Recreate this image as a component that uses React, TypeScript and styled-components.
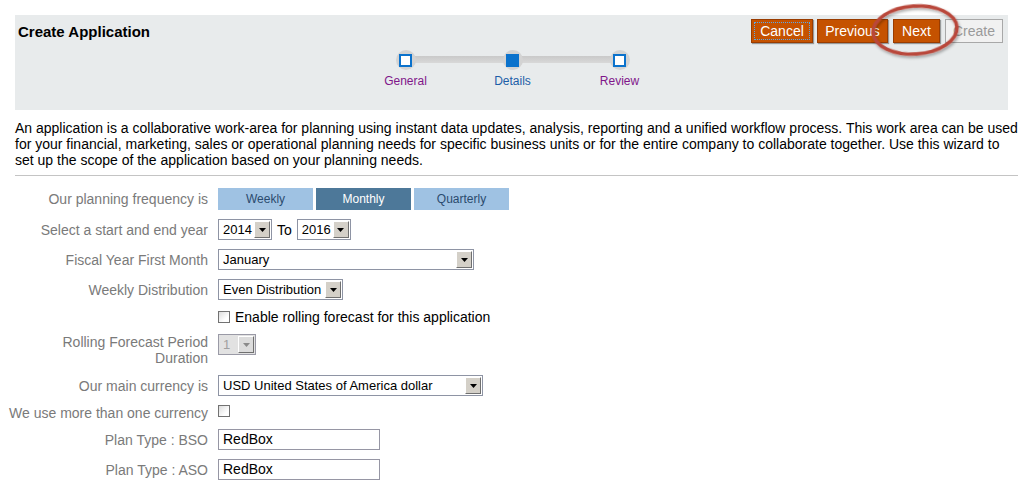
import React from "react";
import styled, { createGlobalStyle } from "styled-components";

const GlobalStyle = createGlobalStyle`
  html, body {
    margin: 0;
    padding: 0;
    background: #ffffff;
    font-family: "Liberation Sans", Arial, sans-serif;
  }
`;

type Step = { label: string; state: "done" | "active" | "todo" };

const steps: Step[] = [
  { label: "General", state: "done" },
  { label: "Details", state: "active" },
  { label: "Review", state: "todo" },
];

function Select({ value, width, disabled }: { value: string; width: number; disabled?: boolean }) {
  return (
    <SelectBox $width={width} $disabled={disabled}>
      <SelectValue $disabled={disabled}>{value}</SelectValue>
      <SelectArrow $disabled={disabled}>
        <svg width="7" height="4" viewBox="0 0 7 4">
          <path d="M0 0h7L3.5 4z" fill={disabled ? "#8a8a8a" : "#000"} />
        </svg>
      </SelectArrow>
    </SelectBox>
  );
}

export default function App() {
  return (
    <Page>
      <GlobalStyle />
      <Header>
        <Title>Create Application</Title>
        <Actions>
          <Button $w={62} $focus>
            Cancel
          </Button>
          <Button $w={71}>Previous</Button>
          <Button $w={47}>Next</Button>
          <Button $w={58} $disabled>
            Create
          </Button>
          <Highlight width="100" height="62" viewBox="0 0 100 62">
            <defs>
              <filter id="sh" x="-20%" y="-20%" width="140%" height="150%">
                <feDropShadow dx="1" dy="2" stdDeviation="1.5" floodColor="#000" floodOpacity="0.35" />
              </filter>
            </defs>
            <ellipse
              cx="50"
              cy="30"
              rx="42"
              ry="24"
              fill="none"
              stroke="#b9473a"
              strokeWidth="3.5"
              filter="url(#sh)"
              transform="rotate(-4 50 30)"
            />
          </Highlight>
        </Actions>
        <Stepper>
          {steps.map((s) => (
            <StepItem key={s.label}>
              <StepDot>
                <StepSquare $filled={s.state === "active"} />
              </StepDot>
              <StepLabel $state={s.state}>{s.label}</StepLabel>
            </StepItem>
          ))}
        </Stepper>
      </Header>

      <Intro>
        An application is a collaborative work-area for planning using instant data updates, analysis, reporting and a
        unified workflow process. This work area can be used for your financial, marketing, sales or operational planning
        needs for specific business units or for the entire company to collaborate together. Use this wizard to set up the
        scope of the application based on your planning needs.
      </Intro>
      <Divider />

      <Form>
        <Row $h={22}>
          <Label>Our planning frequency is</Label>
          <Segments>
            <Segment>Weekly</Segment>
            <Segment $active>Monthly</Segment>
            <Segment>Quarterly</Segment>
          </Segments>
        </Row>
        <Row $h={21}>
          <Label>Select a start and end year</Label>
          <Inline>
            <Select value="2014" width={54} />
            <Joiner>To</Joiner>
            <Select value="2016" width={54} />
          </Inline>
        </Row>
        <Row $h={21}>
          <Label>Fiscal Year First Month</Label>
          <Select value="January" width={256} />
        </Row>
        <Row $h={21}>
          <Label>Weekly Distribution</Label>
          <Select value="Even Distribution" width={125} />
        </Row>
        <Row $h={16}>
          <span />
          <CheckLine>
            <Check />
            <span>Enable rolling forecast for this application</span>
          </CheckLine>
        </Row>
        <Row $h={32} $top>
          <Label>
            Rolling Forecast Period
            <br />
            Duration
          </Label>
          <Select value="1" width={38} disabled />
        </Row>
        <Row $h={21}>
          <Label>Our main currency is</Label>
          <Select value="USD United States of America dollar" width={265} />
        </Row>
        <Row $h={15} $top>
          <Label>We use more than one currency</Label>
          <Check />
        </Row>
        <Row $h={21}>
          <Label>Plan Type : BSO</Label>
          <TextBox>RedBox</TextBox>
        </Row>
        <Row $h={21}>
          <Label>Plan Type : ASO</Label>
          <TextBox>RedBox</TextBox>
        </Row>
      </Form>
    </Page>
  );
}

const Page = styled.div`
  width: 1024px;
  height: 493px;
  padding-top: 15px;
  box-sizing: border-box;
  overflow: hidden;
`;

const Header = styled.div`
  margin: 0 16px 0 15px;
  height: 95px;
  background: #e8ebec;
  display: grid;
  grid-template-columns: 1fr auto;
  grid-template-rows: 28px auto;
  padding: 4px 5px 0 3px;
  box-sizing: border-box;
`;

const Title = styled.div`
  font-size: 15px;
  font-weight: bold;
  color: #000;
  line-height: 26px;
`;

const Actions = styled.div`
  position: relative;
  display: flex;
  gap: 5px;
  height: 24px;
`;

const Button = styled.div<{ $w: number; $focus?: boolean; $disabled?: boolean }>`
  width: ${(p) => p.$w}px;
  height: 24px;
  box-sizing: border-box;
  display: flex;
  align-items: center;
  justify-content: center;
  overflow: hidden;
  white-space: nowrap;
  font-size: 14px;
  background: ${(p) => (p.$disabled ? "#f1f1f1" : "#c55200")};
  color: ${(p) => (p.$disabled ? "#9a9a9a" : "#ffffff")};
  border: 1px solid ${(p) => (p.$disabled ? "#a8a8a8" : "#9a3c00")};
  box-shadow: ${(p) => (p.$disabled ? "none" : "1px 1px 1px rgba(0,0,0,0.35)")};
  outline: ${(p) => (p.$focus ? "1px dotted #5aa8e8" : "none")};
  outline-offset: -4px;

  &:first-child {
    margin-right: -1px;
  }
`;

const Highlight = styled.svg`
  position: absolute;
  left: 114px;
  top: -19px;
  pointer-events: none;
`;

const Stepper = styled.div`
  grid-column: 1 / -1;
  justify-self: center;
  position: relative;
  display: flex;
  margin-top: 3px;
  margin-left: 4px;

  &::before {
    content: "";
    position: absolute;
    left: 53px;
    right: 53px;
    top: 6px;
    height: 7px;
    background: linear-gradient(#c9c9c9, #d8d8d8);
  }
`;

const StepItem = styled.div`
  width: 107px;
  display: flex;
  flex-direction: column;
  align-items: center;
  position: relative;
`;

const StepDot = styled.div`
  width: 20px;
  height: 20px;
  border-radius: 50%;
  background: #d3d3d3;
  display: flex;
  align-items: center;
  justify-content: center;
`;

const StepSquare = styled.div<{ $filled?: boolean }>`
  width: 13px;
  height: 13px;
  box-sizing: border-box;
  border: 2px solid #0b72cc;
  background: ${(p) => (p.$filled ? "#0b72cc" : "#ffffff")};
`;

const StepLabel = styled.div<{ $state: Step["state"] }>`
  margin-top: 4px;
  font-size: 12px;
  line-height: 14px;
  color: ${(p) => (p.$state === "active" ? "#1c5ea8" : "#80168a")};
`;

const Intro = styled.p`
  margin: 10px 4px 0 15px;
  font-size: 14px;
  line-height: 16px;
  color: #000;
`;

const Divider = styled.hr`
  margin: 7px 6px 0 15px;
  border: none;
  border-top: 1px solid #c4c4c4;
`;

const Form = styled.div`
  margin-top: 12px;
  display: flex;
  flex-direction: column;
  gap: 9px;
`;

const Row = styled.div<{ $h: number; $top?: boolean }>`
  display: grid;
  grid-template-columns: 208px auto;
  column-gap: 10px;
  align-items: ${(p) => (p.$top ? "start" : "center")};
  height: ${(p) => p.$h}px;
`;

const Label = styled.div`
  text-align: right;
  font-size: 14px;
  line-height: 16px;
  color: #7a7a7a;
  white-space: nowrap;
`;

const Segments = styled.div`
  display: flex;
  gap: 3px;
`;

const Segment = styled.div<{ $active?: boolean }>`
  width: 95px;
  height: 22px;
  display: flex;
  align-items: center;
  justify-content: center;
  font-size: 12px;
  background: ${(p) => (p.$active ? "#4d7899" : "#9fc2e3")};
  color: ${(p) => (p.$active ? "#ffffff" : "#2b4b6e")};
`;

const Inline = styled.div`
  display: flex;
  align-items: center;
`;

const Joiner = styled.span`
  font-size: 14px;
  color: #000;
  margin: 0 5px;
`;

const SelectBox = styled.div<{ $width: number; $disabled?: boolean }>`
  width: ${(p) => p.$width}px;
  height: 21px;
  box-sizing: border-box;
  border: 1px solid ${(p) => (p.$disabled ? "#9a9aa6" : "#8e94a4")};
  background: ${(p) => (p.$disabled ? "#e2e2e2" : "#ffffff")};
  display: flex;
  align-items: stretch;
  padding: 1px;
`;

const SelectValue = styled.div<{ $disabled?: boolean }>`
  flex: 1;
  font-size: 13px;
  line-height: 17px;
  padding-left: 3px;
  color: ${(p) => (p.$disabled ? "#a0a0a0" : "#000")};
  white-space: nowrap;
  overflow: hidden;
`;

const SelectArrow = styled.div<{ $disabled?: boolean }>`
  width: 16px;
  box-sizing: border-box;
  background: ${(p) => (p.$disabled ? "#dcdcdc" : "#d4d0c8")};
  border-top: 1px solid #fff;
  border-left: 1px solid #fff;
  border-right: 1px solid #707070;
  border-bottom: 1px solid #707070;
  display: flex;
  align-items: center;
  justify-content: center;
`;

const CheckLine = styled.label`
  display: flex;
  align-items: center;
  gap: 5px;
  font-size: 14px;
  color: #000;
`;

const Check = styled.span`
  display: inline-block;
  width: 12px;
  height: 12px;
  box-sizing: border-box;
  border: 1px solid #727272;
  background: linear-gradient(135deg, #dcdcdc, #ffffff 70%);
`;

const TextBox = styled.div`
  width: 162px;
  height: 21px;
  box-sizing: border-box;
  border: 1px solid #9696a4;
  font-size: 14px;
  line-height: 19px;
  padding-left: 4px;
  color: #000;
`;
